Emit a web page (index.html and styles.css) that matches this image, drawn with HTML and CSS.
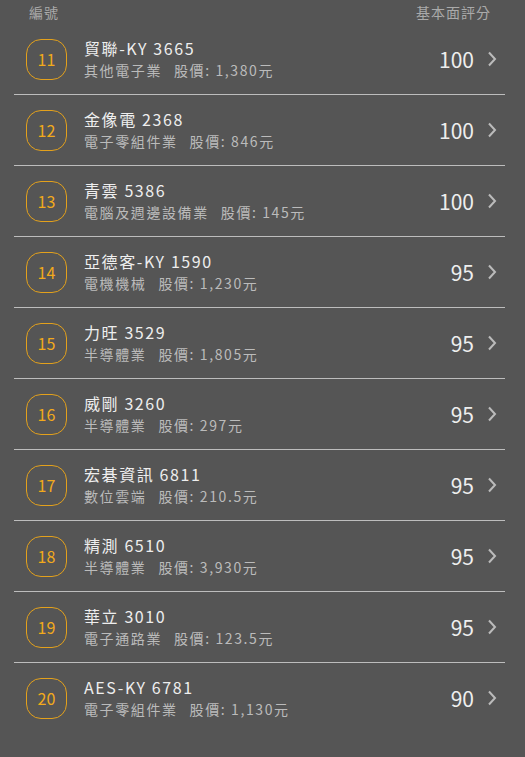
FILE: index.html
```html
<!DOCTYPE html>
<html lang="zh-Hant">
<head>
<meta charset="utf-8">
<link rel="stylesheet" href="styles.css">
</head>
<body>
<div class="header">
  <span>編號</span>
  <span>基本面評分</span>
</div>
<ul class="list">
  <li class="row"><div class="badge">11</div><div class="info"><div class="name">貿聯-KY 3665</div><div class="sub"><span class="ind">其他電子業</span>股價: 1,380元</div></div><div class="score">100</div><svg class="chev" viewBox="0 0 10 16"><path d="M2 1.5 L8 8 L2 14.5"/></svg></li>
  <li class="row"><div class="badge">12</div><div class="info"><div class="name">金像電 2368</div><div class="sub"><span class="ind">電子零組件業</span>股價: 846元</div></div><div class="score">100</div><svg class="chev" viewBox="0 0 10 16"><path d="M2 1.5 L8 8 L2 14.5"/></svg></li>
  <li class="row"><div class="badge">13</div><div class="info"><div class="name">青雲 5386</div><div class="sub"><span class="ind">電腦及週邊設備業</span>股價: 145元</div></div><div class="score">100</div><svg class="chev" viewBox="0 0 10 16"><path d="M2 1.5 L8 8 L2 14.5"/></svg></li>
  <li class="row"><div class="badge">14</div><div class="info"><div class="name">亞德客-KY 1590</div><div class="sub"><span class="ind">電機機械</span>股價: 1,230元</div></div><div class="score">95</div><svg class="chev" viewBox="0 0 10 16"><path d="M2 1.5 L8 8 L2 14.5"/></svg></li>
  <li class="row"><div class="badge">15</div><div class="info"><div class="name">力旺 3529</div><div class="sub"><span class="ind">半導體業</span>股價: 1,805元</div></div><div class="score">95</div><svg class="chev" viewBox="0 0 10 16"><path d="M2 1.5 L8 8 L2 14.5"/></svg></li>
  <li class="row"><div class="badge">16</div><div class="info"><div class="name">威剛 3260</div><div class="sub"><span class="ind">半導體業</span>股價: 297元</div></div><div class="score">95</div><svg class="chev" viewBox="0 0 10 16"><path d="M2 1.5 L8 8 L2 14.5"/></svg></li>
  <li class="row"><div class="badge">17</div><div class="info"><div class="name">宏碁資訊 6811</div><div class="sub"><span class="ind">數位雲端</span>股價: 210.5元</div></div><div class="score">95</div><svg class="chev" viewBox="0 0 10 16"><path d="M2 1.5 L8 8 L2 14.5"/></svg></li>
  <li class="row"><div class="badge">18</div><div class="info"><div class="name">精測 6510</div><div class="sub"><span class="ind">半導體業</span>股價: 3,930元</div></div><div class="score">95</div><svg class="chev" viewBox="0 0 10 16"><path d="M2 1.5 L8 8 L2 14.5"/></svg></li>
  <li class="row"><div class="badge">19</div><div class="info"><div class="name">華立 3010</div><div class="sub"><span class="ind">電子通路業</span>股價: 123.5元</div></div><div class="score">95</div><svg class="chev" viewBox="0 0 10 16"><path d="M2 1.5 L8 8 L2 14.5"/></svg></li>
  <li class="row last"><div class="badge">20</div><div class="info"><div class="name">AES-KY 6781</div><div class="sub"><span class="ind">電子零組件業</span>股價: 1,130元</div></div><div class="score">90</div><svg class="chev" viewBox="0 0 10 16"><path d="M2 1.5 L8 8 L2 14.5"/></svg></li>
</ul>
</body>
</html>
```

FILE: styles.css
```css
html, body {
  margin: 0;
  padding: 0;
  background: #555555;
  height: 100%;
}
body {
  font-family: "Noto Sans CJK TC", "Noto Sans", sans-serif;
  color: #eeeeee;
  letter-spacing: 1.6px;
}
.header {
  display: flex;
  justify-content: space-between;
  align-items: center;
  height: 24px;
  padding: 0 34px 0 29px;
  font-size: 14px;
  letter-spacing: 1px;
  color: #aaaaaa;
  line-height: 23px;
}
.list {
  list-style: none;
  margin: 0 20px 0 14px;
  padding: 0;
}
.row {
  display: flex;
  align-items: center;
  height: 70px;
  border-bottom: 1px solid #bdbdbd;
  padding: 0 8px 0 12px;
}
.row.last {
  border-bottom: none;
}
.badge {
  box-sizing: border-box;
  width: 41px;
  height: 41px;
  border: 1px solid #e3a11c;
  border-radius: 15px;
  color: #f2aa1c;
  font-size: 16px;
  letter-spacing: 0;
  display: flex;
  align-items: center;
  justify-content: center;
  flex-shrink: 0;
}
.info {
  flex: 1;
  margin-left: 17px;
  display: flex;
  flex-direction: column;
}
.name {
  font-size: 16px;
  line-height: 22px;
  color: #eeeeee;
}
.sub {
  font-size: 14px;
  line-height: 22px;
  color: #bbbbbb;
}
.ind {
  margin-right: 12px;
}
.score {
  font-size: 21px;
  letter-spacing: 0;
  color: #eeeeee;
  margin-right: 13px;
}
.chev {
  width: 10px;
  height: 16px;
  fill: none;
  stroke: #bbbbbb;
  stroke-width: 2;
  flex-shrink: 0;
}
```
